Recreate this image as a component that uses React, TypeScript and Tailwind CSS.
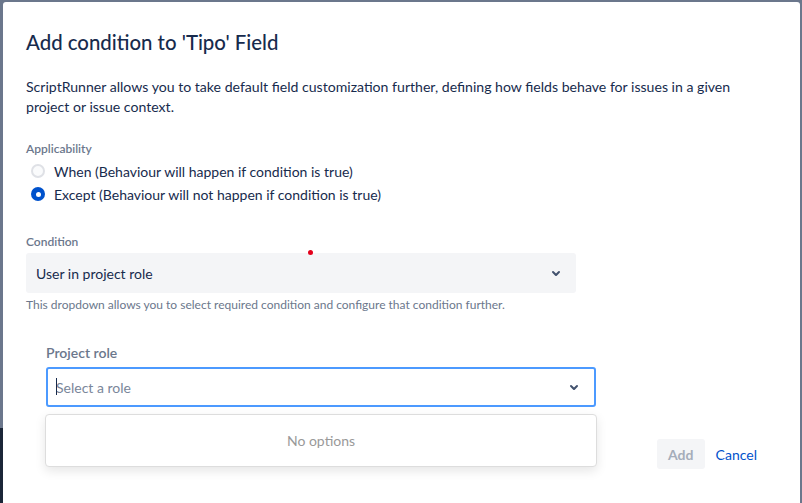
import React from "react";

function Chevron({ className = "" }: { className?: string }) {
  return (
    <svg width="24" height="24" viewBox="0 0 24 24" className={className}>
      <path
        fill="#42526e"
        d="M8.292 10.293a1.009 1.009 0 000 1.419l2.939 2.965c.218.215.5.322.779.322s.556-.107.769-.322l2.93-2.955a1.01 1.01 0 000-1.419.987.987 0 00-1.406 0l-2.298 2.317-2.307-2.327a.99.99 0 00-1.406 0z"
      />
    </svg>
  );
}

export default function App() {
  return (
    <div
      className="w-[802px] h-[503px] overflow-hidden bg-[#6b778c] relative"
      style={{ fontFamily: "Lato, 'Noto Sans', sans-serif" }}
    >
      <div className="absolute left-0 bottom-0 w-[3px] h-[75px] bg-[#1b2638]" />
      <div className="ml-[3px] mt-[2px] w-[797px] h-[510px] bg-white rounded-tl-[3px] rounded-tr-[3px] pt-[28px] pl-[23px] relative">
        <h1 className="text-[20.4px] leading-[24px] font-medium text-[#172b4d]">
          Add condition to 'Tipo' Field
        </h1>
        <p className="mt-[23px] text-[14.1px] leading-[20px] text-[#172b4d] w-[720px]">
          ScriptRunner allows you to take default field customization further, defining how fields behave for issues in a given project or issue context.
        </p>
        <div className="mt-[24px] text-[12px] leading-[16px] font-semibold text-[#6b778c]">
          Applicability
        </div>
        <div className="mt-[2px] flex flex-col">
          <div className="h-[24px] flex items-center">
            <span className="ml-[5px] w-[14px] h-[14px] rounded-full border-2 border-[#dfe1e6] bg-[#fafbfc]" />
            <span className="ml-[9px] text-[14px] text-[#172b4d]">
              When (Behaviour will happen if condition is true)
            </span>
          </div>
          <div className="h-[24px] flex items-center -mt-px">
            <span className="ml-[5px] w-[14px] h-[14px] rounded-full bg-[#0052cc] flex items-center justify-center">
              <span className="w-[5px] h-[5px] rounded-full bg-white" />
            </span>
            <span className="ml-[9px] text-[14px] text-[#172b4d]">
              Except (Behaviour will not happen if condition is true)
            </span>
          </div>
        </div>
        <div className="mt-[28px] text-[12px] leading-[16px] font-semibold text-[#6b778c]">
          Condition
        </div>
        <div className="mt-[3px] w-[550px] h-[40px] bg-[#f4f5f7] rounded-[3px] flex items-center justify-between pl-[10px] pr-[8px]">
          <span className="text-[14px] text-[#172b4d]">User in project role</span>
          <Chevron />
        </div>
        <div className="mt-[4px] text-[12px] leading-[16px] text-[#6b778c]">
          This dropdown allows you to select required condition and configure that condition further.
        </div>
        <div className="ml-[20px] mt-[30px]">
          <div className="text-[14px] leading-[20px] font-semibold text-[#6b778c]">
            Project role
          </div>
          <div className="mt-[4px] relative w-[550px]">
            <div className="h-[40px] border-2 border-[#4c9aff] rounded-[3px] bg-white flex items-center justify-between pl-[8px] pr-[8px]">
              <span className="text-[14px] text-[#7a869a] relative">
                <span className="absolute left-0 top-[1px] w-px h-[17px] bg-[#172b4d]" />
                Select a role
              </span>
              <Chevron />
            </div>
            <div className="absolute left-[-1px] top-[47px] w-[552px] h-[53px] bg-white rounded-[4px] border border-[#dddddd] shadow-[0_4px_11px_rgba(0,0,0,0.1)] flex items-center justify-center z-10">
              <span className="text-[14px] text-[#999999]">No options</span>
            </div>
          </div>
        </div>
        <div className="mt-[32px] flex justify-end pr-[35px] gap-[3px]">
          <button className="w-[48px] h-[30px] rounded-[3px] bg-[#f4f5f7] text-[14px] font-bold text-[#a5adba] flex items-center justify-center">
            Add
          </button>
          <button className="h-[30px] px-[8px] text-[14px] text-[#0052cc] flex items-center">
            Cancel
          </button>
        </div>
        <div className="absolute left-[305px] top-[248px] w-[5px] h-[5px] rounded-full bg-[#e3001b]" />
      </div>
    </div>
  );
}
